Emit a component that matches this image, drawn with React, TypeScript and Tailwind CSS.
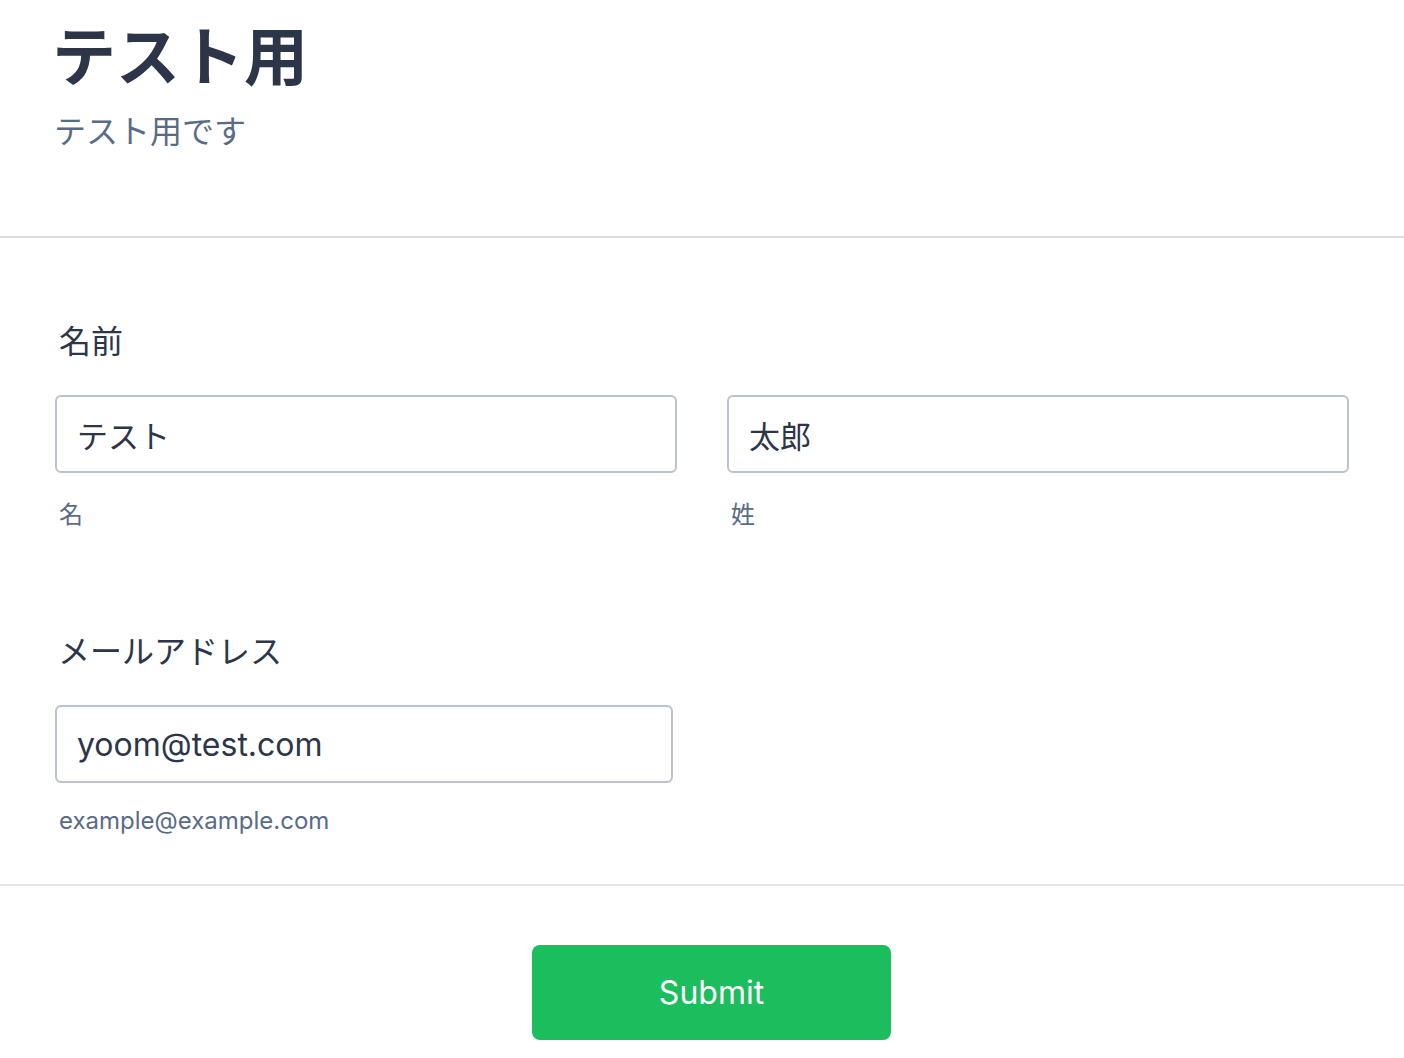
import React from "react";

const font = { fontFamily: '"Inter", "Noto Sans CJK JP", sans-serif' };

const inputClass =
  "h-[78px] w-full rounded-[6px] border-2 border-[#bcc2ce] bg-white px-[20px] text-[#2d3648] outline-none";

function Field({ value, hint }: { value: string; hint: string }) {
  return (
    <div>
      <input readOnly value={value} className={`${inputClass} text-[31px]`} />
      <p className="mt-[30px] pl-[4px] text-[24px] leading-[24px] text-[#5a6b88]">{hint}</p>
    </div>
  );
}

export default function App() {
  return (
    <div className="min-h-screen bg-white" style={font}>
      <header className="border-b-2 border-[#dcdae5] pl-[54px] pt-[25px] pb-[88px]">
        <h1 className="-ml-[2px] text-[64px] font-bold leading-[64px] text-[#2d3648]">テスト用</h1>
        <p className="mt-[27px] text-[32px] leading-[32px] text-[#5a6b88]">テスト用です</p>
      </header>

      <form className="border-b-2 border-[#e4e5ef] px-[55px] pt-[88px] pb-[51px]">
        <label className="block pl-[4px] text-[32px] leading-[32px] text-[#2d3648]">名前</label>
        <div className="mt-[37px] grid grid-cols-2 gap-[50px]">
          <Field value="テスト" hint="名" />
          <Field value="太郎" hint="姓" />
        </div>

        <label className="mt-[109px] block pl-[3px] text-[32px] leading-[32px] text-[#2d3648]">
          メールアドレス
        </label>
        <div className="mt-[37px] w-[618px]">
          <input readOnly value="yoom@test.com" className={`${inputClass} text-[32px]`} />
          <p className="mt-[26px] pl-[4px] text-[24px] leading-[24px] text-[#5a6b88]">example@example.com</p>
        </div>
      </form>

      <div className="flex justify-center pt-[59px] pb-[18px] pl-[19px]">
        <button
          type="button"
          className="h-[95px] w-[359px] rounded-[8px] bg-[#1bbd5c] text-[32px] text-white"
        >
          Submit
        </button>
      </div>
    </div>
  );
}
